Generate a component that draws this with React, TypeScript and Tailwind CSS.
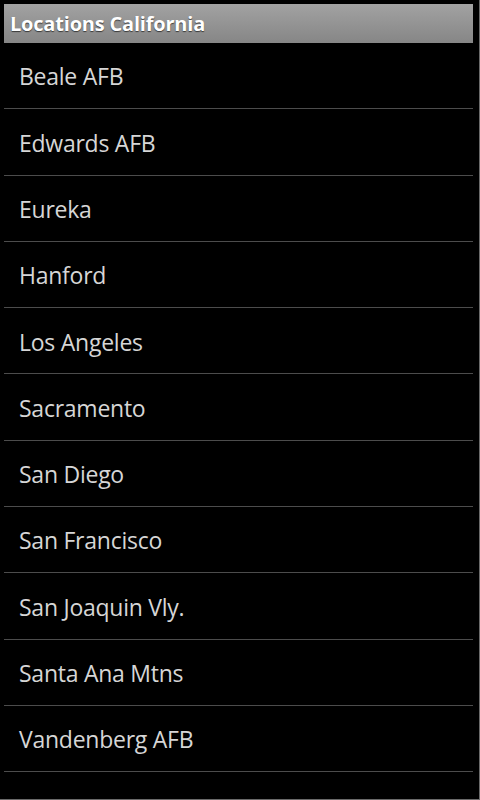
const locations = [
  "Beale AFB",
  "Edwards AFB",
  "Eureka",
  "Hanford",
  "Los Angeles",
  "Sacramento",
  "San Diego",
  "San Francisco",
  "San Joaquin Vly.",
  "Santa Ana Mtns",
  "Vandenberg AFB",
];

export default function App() {
  return (
    <div
      className="w-[480px] h-[800px] bg-black border-r border-b border-[#6a6a6a] overflow-hidden"
      style={{ fontFamily: '"Open Sans", "DejaVu Sans", sans-serif' }}
    >
      <div className="pt-[4px] pl-[4px] pr-[6px]">
        {/* title bar */}
        <div className="h-[39px] bg-gradient-to-b from-[#a2a2a2] to-[#868686] flex items-center px-[6px]">
          <span className="text-white font-bold text-[20px] tracking-[-0.2px] [text-shadow:0_1px_1px_rgba(0,0,0,0.6)]">
            Locations California
          </span>
        </div>

        {/* list */}
        <div>
          {locations.map((name) => (
            <div
              key={name}
              className="h-[66.3px] border-b border-[#4c4c4c] flex items-center pl-[15px] pt-[2px]"
            >
              <span className="text-[#d6d6d6] text-[23px] tracking-[-0.25px]">{name}</span>
            </div>
          ))}
        </div>
      </div>
    </div>
  );
}
